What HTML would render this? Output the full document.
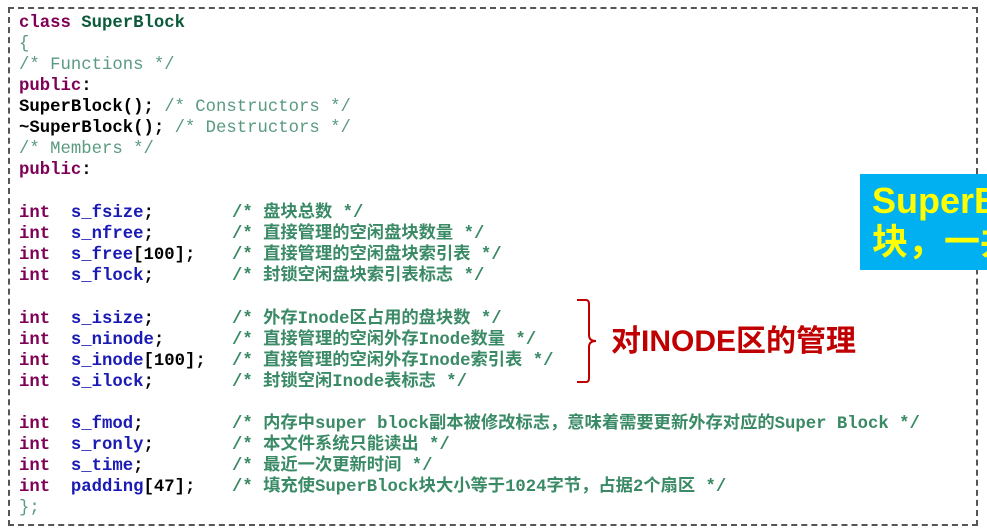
<!DOCTYPE html>
<html><head><meta charset="utf-8"><style>
html,body{margin:0;padding:0;background:#fff;}
body{width:987px;height:532px;position:relative;overflow:hidden;}
.box{position:absolute;left:8px;top:7px;width:970px;height:519px;border:2px dashed #555;box-sizing:border-box;}
.l{position:absolute;left:19px;font-family:"Liberation Mono","Noto Sans CJK SC",monospace;font-size:17.3px;line-height:21px;white-space:pre;font-weight:bold;color:#000;}
.k{color:#7f0055}
.t{color:#0b5a3a}
.i{color:#1a1ab4}
.c{color:#3a8a66;font-weight:bold}
.cl{color:#5a9a80;font-weight:normal}
.col{position:absolute;}
.blue{position:absolute;left:860px;top:174px;width:130px;height:96px;background:#00b0f0;overflow:hidden;}
.blue div{position:absolute;left:12px;color:#ffff00;font-family:"Liberation Sans","Noto Sans CJK SC",sans-serif;font-weight:bold;font-size:36px;line-height:40px;white-space:nowrap;}
.red{position:absolute;left:611px;top:323px;color:#c00000;font-family:"Liberation Sans","Noto Sans CJK SC",sans-serif;font-weight:bold;font-size:30px;line-height:38px;white-space:nowrap;}
</style></head><body>
<div class="box"></div>
<div class="l" style="top:13px"><span class="k">class</span> <span class="t">SuperBlock</span></div>
<div class="l cl" style="top:34px">{</div>
<div class="l cl" style="top:55px">/* Functions */</div>
<div class="l" style="top:76px"><span class="k">public</span>:</div>
<div class="l" style="top:97px">SuperBlock(); <span class="cl">/* Constructors */</span></div>
<div class="l" style="top:118px">~SuperBlock(); <span class="cl">/* Destructors */</span></div>
<div class="l cl" style="top:139px">/* Members */</div>
<div class="l" style="top:160px"><span class="k">public</span>:</div>

<div class="l" style="top:203px"><span class="k">int</span>  <span class="i">s_fsize</span>;<span class="col c" style="left:213px">/* 盘块总数 */</span></div>
<div class="l" style="top:224px"><span class="k">int</span>  <span class="i">s_nfree</span>;<span class="col c" style="left:213px">/* 直接管理的空闲盘块数量 */</span></div>
<div class="l" style="top:245px"><span class="k">int</span>  <span class="i">s_free</span>[100];<span class="col c" style="left:213px">/* 直接管理的空闲盘块索引表 */</span></div>
<div class="l" style="top:266px"><span class="k">int</span>  <span class="i">s_flock</span>;<span class="col c" style="left:213px">/* 封锁空闲盘块索引表标志 */</span></div>

<div class="l" style="top:309px"><span class="k">int</span>  <span class="i">s_isize</span>;<span class="col c" style="left:213px">/* 外存Inode区占用的盘块数 */</span></div>
<div class="l" style="top:330px"><span class="k">int</span>  <span class="i">s_ninode</span>;<span class="col c" style="left:213px">/* 直接管理的空闲外存Inode数量 */</span></div>
<div class="l" style="top:351px"><span class="k">int</span>  <span class="i">s_inode</span>[100];<span class="col c" style="left:213px">/* 直接管理的空闲外存Inode索引表 */</span></div>
<div class="l" style="top:372px"><span class="k">int</span>  <span class="i">s_ilock</span>;<span class="col c" style="left:213px">/* 封锁空闲Inode表标志 */</span></div>

<div class="l" style="top:414px"><span class="k">int</span>  <span class="i">s_fmod</span>;<span class="col c" style="left:213px">/* 内存中super block副本被修改标志，意味着需要更新外存对应的Super Block */</span></div>
<div class="l" style="top:435px"><span class="k">int</span>  <span class="i">s_ronly</span>;<span class="col c" style="left:213px">/* 本文件系统只能读出 */</span></div>
<div class="l" style="top:456px"><span class="k">int</span>  <span class="i">s_time</span>;<span class="col c" style="left:213px">/* 最近一次更新时间 */</span></div>
<div class="l" style="top:477px"><span class="k">int</span>  <span class="i">padding</span>[47];<span class="col c" style="left:213px">/* 填充使SuperBlock块大小等于1024字节，占据2个扇区 */</span></div>
<div class="l cl" style="top:498px">};</div>

<div class="blue"><div style="top:7px">SuperBlock</div><div style="top:48px">块，一共</div></div>

<svg style="position:absolute;left:570px;top:295px" width="40" height="92">
<path d="M7 5 H16 Q19 5 19 9 V40 Q19 46 26 46 Q19 46 19 52 V83 Q19 87 16 87 H7" fill="none" stroke="#c00000" stroke-width="2"/>
</svg>
<div class="red">对INODE区的管理</div>
</body></html>
